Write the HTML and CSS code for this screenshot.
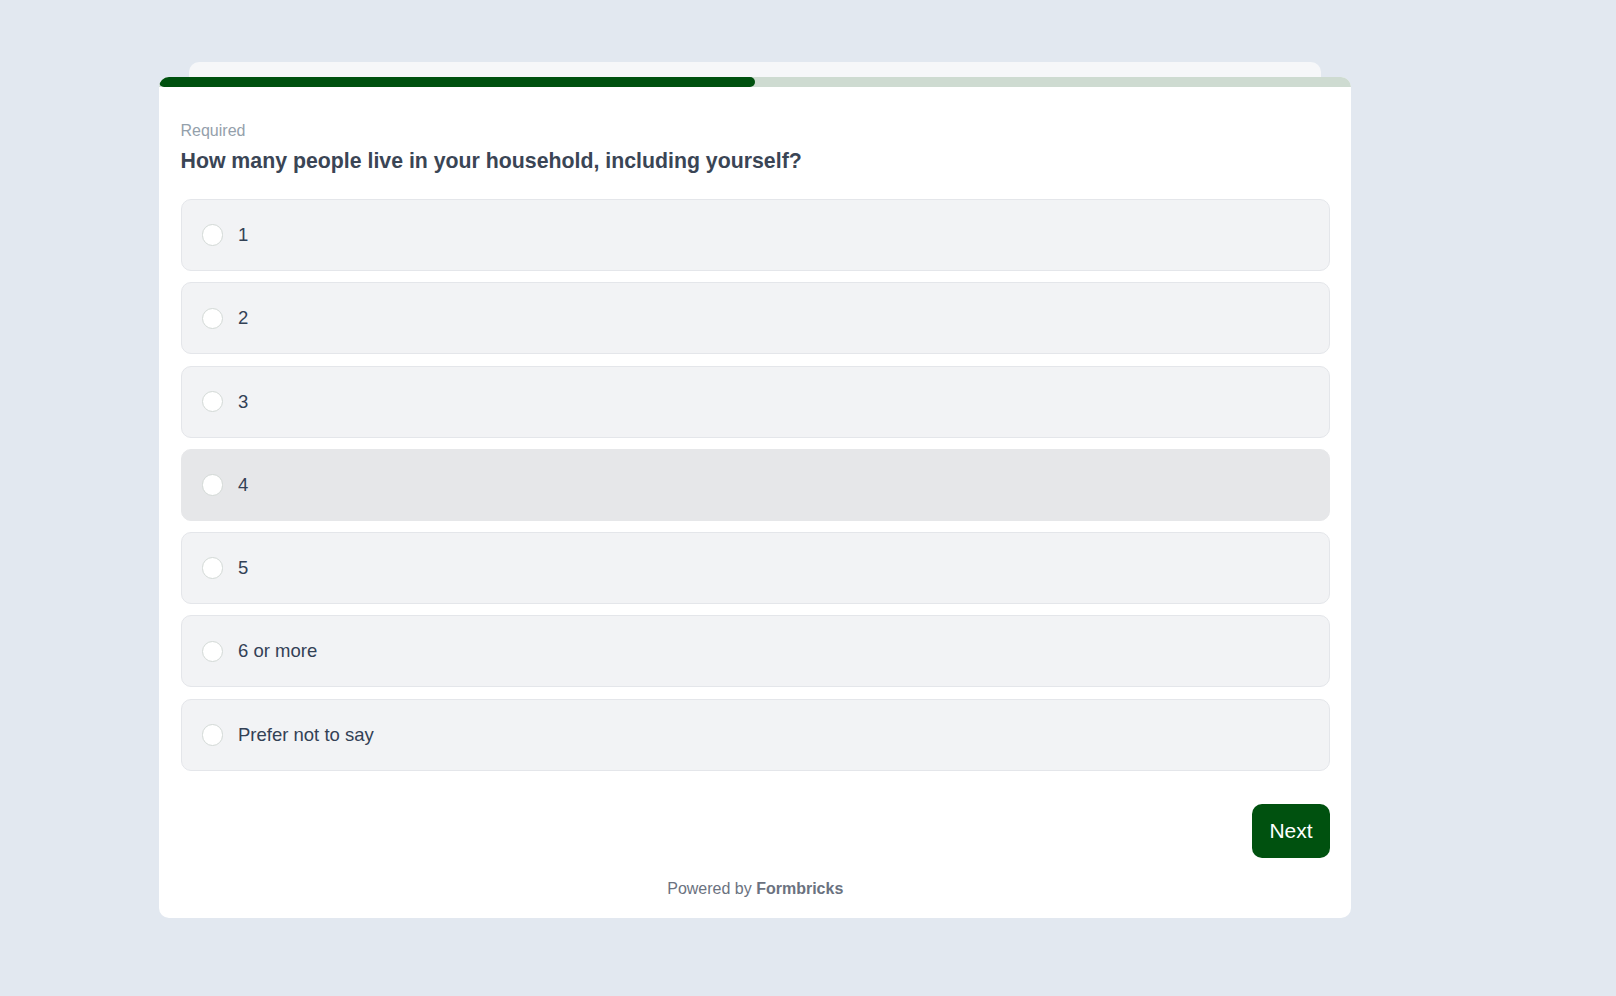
FILE: index.html
```html
<!DOCTYPE html>
<html lang="en">
<head>
<meta charset="utf-8">
<title>Survey</title>
<link rel="stylesheet" href="styles.css">
</head>
<body>
<div class="stage">
  <div class="stack">
    <div class="back-card"></div>
    <div class="card">
      <div class="progress"><div class="progress-fill" style="width:50%"></div></div>
      <div class="content">
        <div class="required">Required</div>
        <h1 class="question">How many people live in your household, including yourself?</h1>
        <div class="options">
          <label class="option"><span class="radio"></span><span class="label">1</span></label>
          <label class="option"><span class="radio"></span><span class="label">2</span></label>
          <label class="option"><span class="radio"></span><span class="label">3</span></label>
          <label class="option option-hover"><span class="radio"></span><span class="label">4</span></label>
          <label class="option"><span class="radio"></span><span class="label">5</span></label>
          <label class="option"><span class="radio"></span><span class="label">6 or more</span></label>
          <label class="option"><span class="radio"></span><span class="label">Prefer not to say</span></label>
        </div>
        <div class="actions"><button class="next">Next</button></div>
        <div class="powered">Powered by <b>Formbricks</b></div>
      </div>
    </div>
  </div>
</div>
</body>
</html>
```
FILE: styles.css
```css
html, body {
  margin: 0;
  padding: 0;
  background: #e2e8f0;
  font-family: "Liberation Sans", Arial, Helvetica, sans-serif;
}
.stage {
  padding: 77px 0 0 159px;
}
.stack {
  position: relative;
  width: 1192px;
}
.back-card {
  position: absolute;
  top: -15px;
  left: 30px;
  right: 30px;
  height: 60px;
  background: #f6f7f9;
  border-radius: 10px;
}
.card {
  position: relative;
  background: #ffffff;
  border-radius: 10px;
  overflow: hidden;
  height: 841px;
}
.progress {
  height: 10px;
  background: #cedbd1;
}
.progress-fill {
  height: 100%;
  background: #00510f;
  border-radius: 9999px;
}
.content {
  padding: 34px 21px 0 21.5px;
}
.required {
  font-size: 16px;
  line-height: 20px;
  color: #94a0ab;
}
.question {
  margin: 6px 0 0 0;
  font-size: 21.3px;
  line-height: 28px;
  font-weight: bold;
  color: #3a4555;
}
.options {
  margin-top: 24px;
  display: flex;
  flex-direction: column;
  gap: 11.3px;
}
.option {
  box-sizing: border-box;
  height: 72px;
  display: flex;
  align-items: center;
  padding-left: 20px;
  background: #f2f3f5;
  border: 1px solid #e4e6ea;
  border-radius: 10px;
}
.option-hover {
  background: #e6e7e9;
  border-color: #e6e7e9;
}
.radio {
  box-sizing: border-box;
  width: 21.5px;
  height: 21.5px;
  border-radius: 50%;
  background: #ffffff;
  border: 1px solid #d3d9d6;
  flex: none;
}
.label {
  margin-left: 15px;
  font-size: 18.5px;
  color: #334155;
}
.actions {
  margin-top: 33px;
  display: flex;
  justify-content: flex-end;
}
.next {
  width: 78px;
  height: 54.7px;
  border: none;
  border-radius: 10px;
  background: #00510f;
  color: #ffffff;
  font-family: "Liberation Sans", Arial, Helvetica, sans-serif;
  font-size: 21px;
  padding: 0;
}
.powered {
  margin-top: 21px;
  text-align: center;
  font-size: 16px;
  line-height: 20px;
  color: #6b7280;
}
.powered b {
  font-weight: bold;
}
```
